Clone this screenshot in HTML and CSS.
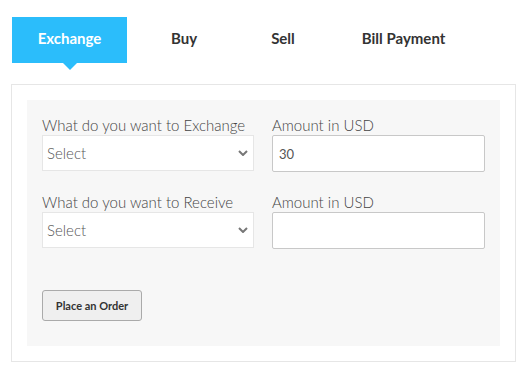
FILE: index.html
```html
<!DOCTYPE html>
<html lang="en">
<head>
    <meta charset="UTF-8">
    <meta name="viewport" content="width=device-width, initial-scale=1.0">
    <title>Exchange</title>
    <link rel="stylesheet" href="styles.css">
</head>
<body>
    <div class="wrap">
        <ul class="tabs">
            <li class="tab active">Exchange</li>
            <li class="tab tab-buy">Buy</li>
            <li class="tab tab-sell">Sell</li>
            <li class="tab tab-bill">Bill Payment</li>
        </ul>

        <div class="box">
            <form class="panel">
                <div class="row">
                    <div class="field">
                        <label>What do you want to Exchange</label>
                        <div class="select">
                            <span>Select</span>
                            <svg width="10" height="6" viewBox="0 0 10 6"><path d="M1 1 L5 5 L9 1" fill="none" stroke="#777" stroke-width="2"/></svg>
                        </div>
                    </div>
                    <div class="field">
                        <label>Amount in USD</label>
                        <input type="text" value="30">
                    </div>
                </div>
                <div class="row">
                    <div class="field">
                        <label>What do you want to Receive</label>
                        <div class="select">
                            <span>Select</span>
                            <svg width="10" height="6" viewBox="0 0 10 6"><path d="M1 1 L5 5 L9 1" fill="none" stroke="#777" stroke-width="2"/></svg>
                        </div>
                    </div>
                    <div class="field">
                        <label>Amount in USD</label>
                        <input type="text">
                    </div>
                </div>
                <button type="button">Place an Order</button>
            </form>
        </div>
    </div>
</body>
</html>
```

FILE: styles.css
```css
:root {
    --blue: #2bbdfb;
    --text: #333;
    --label: #444;
}

body {
    margin: 0;
    font-family: Lato, 'Open Sans', sans-serif;
    background: white;
}

.wrap {
    padding: 17px 3px 0 11px;
}

.tabs {
    list-style: none;
    margin: 0 0 21px 1px;
    padding: 0;
    display: flex;
}

.tab {
    position: relative;
    height: 46px;
    line-height: 42px;
    font-size: 15px;
    font-weight: bold;
    color: var(--text);
}

.tab.active {
    width: 115px;
    text-align: center;
    background: var(--blue);
    color: white;
}

.tab.active::after {
    content: '';
    position: absolute;
    left: 50%;
    bottom: -7px;
    margin-left: -7px;
    border-left: 7px solid transparent;
    border-right: 7px solid transparent;
    border-top: 7px solid var(--blue);
}

.tab-buy { margin-left: 44px; }
.tab-sell { margin-left: 74px; }
.tab-bill { margin-left: 67px; }

.box {
    border: 1px solid #e6e6e6;
    padding: 15px;
}

.panel {
    background: #f7f7f7;
    padding: 15px 15px 25px;
}

.row {
    display: grid;
    grid-template-columns: 212px 213px;
    gap: 18px;
    margin-bottom: 20px;
}

.field label {
    display: block;
    font-size: 15px;
    font-weight: 300;
    color: var(--label);
    line-height: 20px;
}

.select {
    height: 36px;
    box-sizing: border-box;
    background: white;
    border: 1px solid #e6e6e6;
    display: flex;
    align-items: center;
    justify-content: space-between;
    padding: 0 5px 0 4px;
    font-size: 15px;
    font-weight: 300;
    color: #555;
}

input {
    width: 100%;
    height: 37px;
    box-sizing: border-box;
    border: 1px solid #c8c8c8;
    border-radius: 2px;
    background: white;
    padding: 0 6px;
    font-family: inherit;
    font-size: 13px;
    color: #555;
}

button {
    display: block;
    margin-top: 41px;
    width: 100px;
    height: 31px;
    background: #efefef;
    border: 1px solid #aaa;
    border-radius: 3px;
    font-family: inherit;
    font-size: 11px;
    font-weight: bold;
    color: #333;
    cursor: pointer;
}
```
